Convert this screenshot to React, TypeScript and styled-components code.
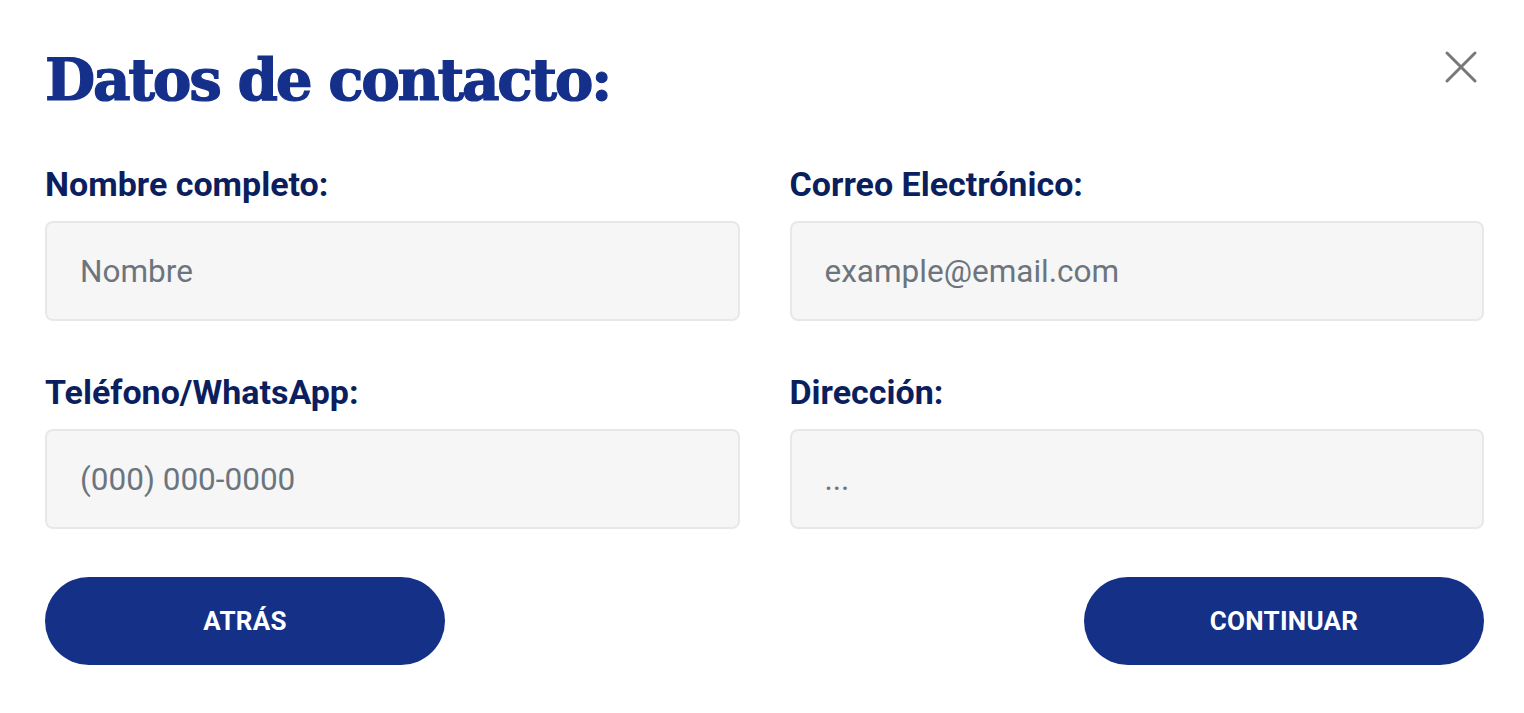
import React from "react"
import styled, { createGlobalStyle } from "styled-components"

const GlobalStyle = createGlobalStyle`
    body {
        margin: 0;
        background: #fff;
        font-family: Roboto, "Liberation Sans", sans-serif;
    }
`

interface FieldProps {
    label: string,
    placeholder: string,
}

const Field = (props: FieldProps) => {
    return (
        <FieldBox>
            <Label>{props.label}</Label>
            <Input placeholder={props.placeholder} />
        </FieldBox>
    )
}

export default function App() {
    return (
        <>
            <GlobalStyle />
            <Modal>
                <Header>
                    <Title>Datos de contacto:</Title>
                    <CloseButton aria-label="Cerrar">
                        <svg width="34" height="34" viewBox="0 0 34 34" fill="none">
                            <path d="M3 3L31 31M31 3L3 31" stroke="#787878" strokeWidth="3" strokeLinecap="round" />
                        </svg>
                    </CloseButton>
                </Header>
                <FormGrid>
                    <Field label="Nombre completo:" placeholder="Nombre" />
                    <Field label="Correo Electrónico:" placeholder="example@email.com" />
                    <Field label="Teléfono/WhatsApp:" placeholder="(000) 000-0000" />
                    <Field label="Dirección:" placeholder="..." />
                </FormGrid>
                <Actions>
                    <PillButton>ATRÁS</PillButton>
                    <PillButton>CONTINUAR</PillButton>
                </Actions>
            </Modal>
        </>
    )
}

const Modal = styled.div`
    display: flex;
    flex-direction: column;
    padding: 40px 40px 48px 45px;
    background: #fff;
`

const Header = styled.div`
    display: flex;
    justify-content: space-between;
    align-items: flex-start;
    margin-bottom: 44px;
`

const Title = styled.h1`
    margin: 0;
    font-family: "DejaVu Serif", "Liberation Serif", serif;
    font-weight: 700;
    font-size: 58px;
    line-height: 80px;
    letter-spacing: -2.3px;
    color: #14308a;
    -webkit-text-stroke: 1.2px #14308a;
`

const CloseButton = styled.button`
    display: flex;
    align-items: center;
    justify-content: center;
    margin: 10px 6px 0 0;
    padding: 0;
    border: none;
    background: none;
    cursor: pointer;
`

const FormGrid = styled.div`
    display: grid;
    grid-template-columns: 1fr 1fr;
    column-gap: 50px;
    row-gap: 51px;
`

const FieldBox = styled.div`
    display: flex;
    flex-direction: column;
    gap: 17px;
`

const Label = styled.label`
    font-family: Roboto, "Liberation Sans", sans-serif;
    font-weight: 700;
    font-size: 34px;
    line-height: 40px;
    color: #0b1f5e;
`

const Input = styled.input`
    box-sizing: border-box;
    height: 100px;
    width: 100%;
    padding: 0 33px;
    border: 2px solid #e8e8e8;
    border-radius: 8px;
    background: #f6f6f6;
    font-family: Roboto, "Liberation Sans", sans-serif;
    font-size: 31.5px;
    color: #333;
    outline: none;

    &::placeholder {
        color: #6c757d;
    }
`

const Actions = styled.div`
    display: flex;
    justify-content: space-between;
    margin-top: 48px;
`

const PillButton = styled.button`
    width: 400px;
    height: 88px;
    border: none;
    border-radius: 44px;
    background: #143087;
    color: #fff;
    font-family: Roboto, "Liberation Sans", sans-serif;
    font-weight: 700;
    font-size: 26px;
    letter-spacing: 0.3px;
    cursor: pointer;
`
